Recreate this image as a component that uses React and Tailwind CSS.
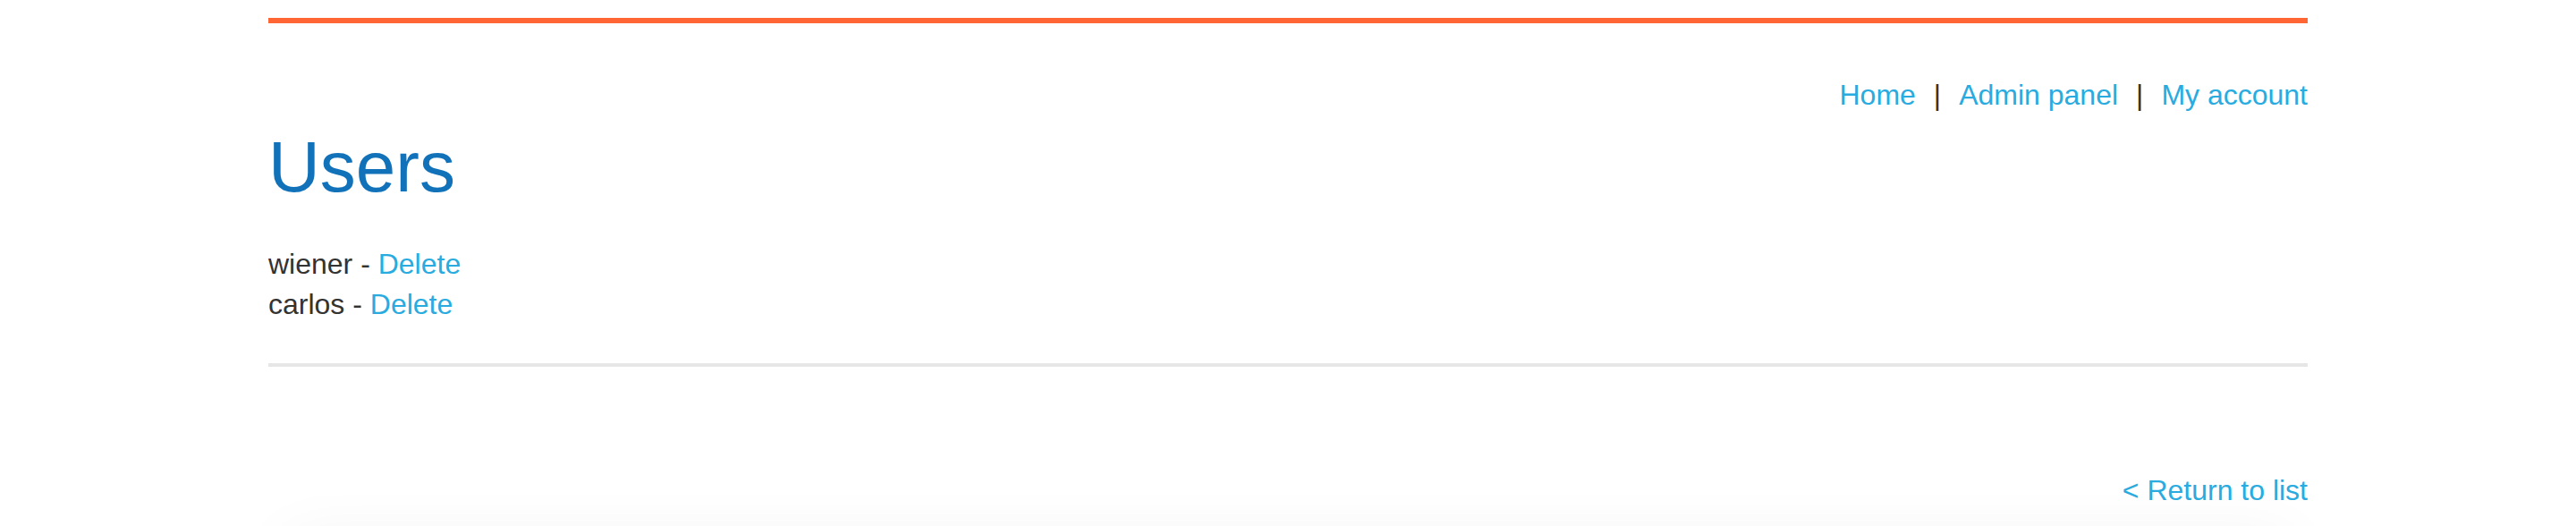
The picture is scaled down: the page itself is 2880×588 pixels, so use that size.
import React from 'react';

const users = ['wiener', 'carlos'];

const App = () => {
  return (
    <div className="min-h-[588px] bg-white overflow-hidden font-['Liberation_Sans',Arial,sans-serif] text-[#333332]">
      <div className="w-[2280px] mx-auto pt-[20px]">
        {/* top accent bar */}
        <div className="h-[6px] bg-[#ff6633]" />

        {/* nav */}
        <div className="mt-[58px] flex justify-end items-center text-[32px] leading-[44.8px]">
          <a href="#" className="text-[#29abe0]">Home</a>
          <span className="mx-[20px]">|</span>
          <a href="#" className="text-[#29abe0]">Admin panel</a>
          <span className="mx-[20px]">|</span>
          <a href="#" className="text-[#29abe0]">My account</a>
        </div>

        <h1 className="mt-[12px] text-[80px] leading-[92px] text-[#1172ba] font-normal">Users</h1>

        <div className="mt-[40px] text-[32px] leading-[44.8px]">
          {users.map(u => (
            <div key={u}>
              <span>{u} - </span>
              <a href="#" className="text-[#29abe0]">Delete</a>
            </div>
          ))}
        </div>

        <div className="mt-[44px] h-[4px] bg-[#e6e6e6]" />

        <div className="mt-[116px] flex justify-end text-[32px] leading-[44.8px]">
          <a href="#" className="text-[#29abe0]">&lt; Return to list</a>
        </div>
      </div>

      {/* soft footer shadow */}
      <div className="w-[2240px] mx-auto mt-[36px] h-[40px] bg-white shadow-[0_0_70px_rgba(0,0,0,0.07)]" />
    </div>
  );
};

export default App;
